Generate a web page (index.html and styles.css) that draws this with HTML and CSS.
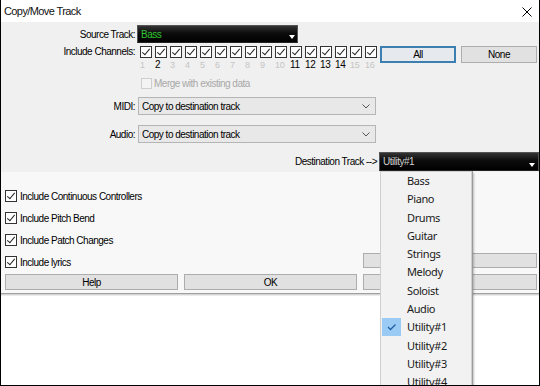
FILE: index.html
```html
<!DOCTYPE html>
<html lang="en">
<head>
    <meta charset="UTF-8">
    <meta name="viewport" content="width=device-width, initial-scale=1.0">
    <title>Copy/Move Track</title>
    <link rel="stylesheet" href="styles.css">
</head>
<body>
    <div class="dialog">
        <div class="titlebar">
            <span class="title">Copy/Move Track</span>
            <svg class="close" width="10" height="10" viewBox="0 0 10 10">
                <path d="M0.5 0.5 L9.5 9.5 M9.5 0.5 L0.5 9.5" stroke="#000" stroke-width="1" fill="none"/>
            </svg>
        </div>

        <!-- upper part: track and channel settings -->
        <div class="top-panel">
            <div class="row row-source">
                <span class="lbl">Source Track:</span>
                <div class="dark-select source">
                    <span class="val green">Bass</span>
                    <span class="arrow"></span>
                </div>
            </div>

            <div class="row row-channels">
                <span class="lbl">Include Channels:</span>
                <div class="channels">
                    <div class="ch"><span class="cb checked"></span><span class="num">1</span></div>
                    <div class="ch"><span class="cb checked"></span><span class="num on">2</span></div>
                    <div class="ch"><span class="cb checked"></span><span class="num">3</span></div>
                    <div class="ch"><span class="cb checked"></span><span class="num">4</span></div>
                    <div class="ch"><span class="cb checked"></span><span class="num">5</span></div>
                    <div class="ch"><span class="cb checked"></span><span class="num">6</span></div>
                    <div class="ch"><span class="cb checked"></span><span class="num">7</span></div>
                    <div class="ch"><span class="cb checked"></span><span class="num">8</span></div>
                    <div class="ch"><span class="cb checked"></span><span class="num">9</span></div>
                    <div class="ch"><span class="cb checked"></span><span class="num">10</span></div>
                    <div class="ch"><span class="cb checked"></span><span class="num on">11</span></div>
                    <div class="ch"><span class="cb checked"></span><span class="num on">12</span></div>
                    <div class="ch"><span class="cb checked"></span><span class="num on">13</span></div>
                    <div class="ch"><span class="cb checked"></span><span class="num on">14</span></div>
                    <div class="ch"><span class="cb checked"></span><span class="num">15</span></div>
                    <div class="ch"><span class="cb checked"></span><span class="num">16</span></div>
                </div>
                <button class="btn btn-all">All</button>
                <button class="btn btn-none">None</button>
            </div>

            <div class="row row-merge">
                <span class="cb disabled"></span>
                <span class="merge-text">Merge with existing data</span>
            </div>

            <div class="row row-combo first">
                <span class="lbl">MIDI:</span>
                <div class="combo">
                    <span>Copy to destination track</span>
                    <svg class="chevron" width="8" height="5" viewBox="0 0 8 5">
                        <path d="M0.5 0.5 L4 4 L7.5 0.5" stroke="#555" stroke-width="1" fill="none"/>
                    </svg>
                </div>
            </div>

            <div class="row row-combo">
                <span class="lbl">Audio:</span>
                <div class="combo">
                    <span>Copy to destination track</span>
                    <svg class="chevron" width="8" height="5" viewBox="0 0 8 5">
                        <path d="M0.5 0.5 L4 4 L7.5 0.5" stroke="#555" stroke-width="1" fill="none"/>
                    </svg>
                </div>
            </div>

            <div class="row row-dest">
                <span class="dest-lbl">Destination Track --&gt;</span>
                <div class="dark-select dest">
                    <span class="val">Utility#1</span>
                    <span class="arrow"></span>
                </div>
            </div>
        </div>

        <!-- lower part: options and buttons -->
        <div class="bottom-panel">
            <div class="opt r1"><span class="cb checked"></span>Include Continuous Controllers</div>
            <div class="opt r2"><span class="cb checked"></span>Include Pitch Bend</div>
            <div class="opt r3"><span class="cb checked"></span>Include Patch Changes</div>
            <div class="opt r4"><span class="cb checked"></span>Include lyrics</div>
            <button class="btn btn-extra"></button>
            <button class="btn btn-bottom">Help</button>
            <button class="btn btn-bottom">OK</button>
            <button class="btn btn-bottom">Cancel</button>
        </div>

        <!-- open destination track list -->
        <div class="menu">
            <div class="menu-item">Bass</div>
            <div class="menu-item">Piano</div>
            <div class="menu-item">Drums</div>
            <div class="menu-item">Guitar</div>
            <div class="menu-item">Strings</div>
            <div class="menu-item">Melody</div>
            <div class="menu-item">Soloist</div>
            <div class="menu-item">Audio</div>
            <div class="menu-item selected">
                <span class="check">
                    <svg width="19" height="18" viewBox="0 0 19 18">
                        <path d="M6 9 L8.5 11.5 L13.5 6.5" stroke="#1f5fa8" stroke-width="1.3" fill="none"/>
                    </svg>
                </span>
                Utility#1
            </div>
            <div class="menu-item">Utility#2</div>
            <div class="menu-item">Utility#3</div>
            <div class="menu-item">Utility#4</div>
        </div>
    </div>
</body>
</html>
```

FILE: styles.css
```css
body {
    margin: 0;
    font-family: "Liberation Sans", Arial, sans-serif;
    font-size: 10px;
    letter-spacing: -0.5px;
    color: #000;
}
.dialog {
    position: relative;
    width: 540px;
    height: 386px;
    box-sizing: border-box;
    border-left: 1px solid #000;
    border-right: 1px solid #000;
    border-bottom: 1px solid #000;
    background-color: #fff;
    overflow: hidden;
}
.titlebar {
    height: 22px;
    display: flex;
    align-items: center;
    justify-content: space-between;
    padding: 0 7px 0 3px;
    background-color: #fff;
}
.title {
    font-size: 11px;
    letter-spacing: -0.6px;
    color: #111;
}
.close {
    margin-top: 1px;
}

/* upper panel */
.top-panel {
    height: 150px;
    background-color: #f0f0f0;
    padding-top: 3px;
    box-sizing: border-box;
}
.row {
    display: flex;
    align-items: center;
}
.lbl {
    width: 135px;
    padding-right: 1px;
    box-sizing: border-box;
    text-align: right;
    flex-shrink: 0;
}
.row-source {
    height: 18px;
}
.dark-select {
    position: relative;
    height: 100%;
    box-sizing: border-box;
    border: 1px solid #555;
    border-bottom-color: #222;
    background: linear-gradient(#333, #0c0c0c 45%, #000);
    display: flex;
    align-items: center;
    padding-left: 3px;
}
.dark-select.source {
    width: 161px;
    margin-left: 1px;
}
.val {
    color: #cfcfcf;
}
.val.green {
    color: #2fc62f;
}
.arrow {
    position: absolute;
    right: 2px;
    bottom: 3px;
    width: 0;
    height: 0;
    border-left: 3px solid transparent;
    border-right: 3px solid transparent;
    border-top: 4px solid #fff;
}

/* channel checkboxes */
.row-channels {
    margin-top: 3px;
    align-items: flex-start;
    height: 24px;
}
.row-channels .lbl {
    line-height: 12px;
}
.channels {
    display: flex;
    margin-left: 3px;
}
.ch {
    width: 15px;
    display: flex;
    flex-direction: column;
}
.ch .cb {
    margin-left: 1px;
}
.num {
    margin-top: 2px;
    padding-left: 1px;
    font-size: 9px;
    line-height: 10px;
    letter-spacing: -0.3px;
    color: #c4c4c4;
}
.num.on {
    color: #000;
    font-size: 10px;
}
.cb {
    position: relative;
    display: inline-block;
    width: 12px;
    height: 12px;
    box-sizing: border-box;
    border: 1px solid #333;
    background-color: #fff;
    flex-shrink: 0;
}
.cb.checked::after {
    content: "";
    position: absolute;
    left: 3px;
    top: 0px;
    width: 3px;
    height: 7px;
    border-right: 1px solid #222;
    border-bottom: 1px solid #222;
    transform: rotate(40deg);
}
.cb.disabled {
    width: 11px;
    height: 11px;
    border-color: #cfcfcf;
    background-color: #f4f4f4;
}
.btn {
    font-family: inherit;
    font-size: 10px;
    letter-spacing: -0.5px;
    color: #000;
    background-color: #e1e1e1;
    border: 1px solid #adadad;
    padding: 0;
    box-sizing: border-box;
}
.btn-all {
    width: 76px;
    height: 17px;
    margin-left: 1px;
    border: 2px solid #3c7fb1;
    background-color: #e6eaee;
}
.btn-none {
    width: 76px;
    height: 17px;
    margin-left: 5px;
}
.row-merge {
    margin-top: 7px;
    height: 12px;
    padding-left: 140px;
}
.merge-text {
    margin-left: 2px;
    color: #a8a8a8;
}

/* MIDI / Audio combos */
.row-combo {
    height: 18px;
    margin-top: 10px;
}
.row-combo.first {
    margin-top: 8px;
}
.combo {
    width: 238px;
    height: 100%;
    margin-left: 2px;
    box-sizing: border-box;
    border: 1px solid #b5b5b5;
    background-color: #e8e8e8;
    display: flex;
    align-items: center;
    justify-content: space-between;
    padding: 0 5px 0 3px;
}
.row-dest {
    height: 19px;
    margin-top: 9px;
    justify-content: flex-end;
}
.dest-lbl {
    margin-right: 2px;
}
.dark-select.dest {
    width: 160px;
}
.dark-select.dest .arrow {
    right: 3px;
}

/* lower panel */
.bottom-panel {
    height: 122px;
    box-sizing: border-box;
    padding: 13px 0 3px 4px;
    background-color: #f8f8f8;
    border-bottom: 1px solid #a0a0a0;
    box-shadow: 0 1px 0 #d4d4d4, 0 2px 0 #ececec;
    display: grid;
    grid-template-columns: 173px 173px 174px;
    grid-template-rows: repeat(4, 22px) 17px;
    column-gap: 6px;
}
.opt {
    grid-column: 1 / 3;
    display: flex;
    align-items: center;
}
.opt .cb {
    margin-right: 3px;
}
.r1 { grid-row: 1; }
.r2 { grid-row: 2; }
.r3 { grid-row: 3; }
.r4 { grid-row: 4; }
.btn-extra {
    grid-column: 3;
    grid-row: 4;
    height: 15px;
    margin-top: 2px;
}
.btn-bottom {
    grid-row: 5;
    height: 16px;
    align-self: end;
}

/* dropdown list */
.menu {
    position: absolute;
    left: 379px;
    top: 171px;
    width: 92px;
    height: 230px;
    box-sizing: border-box;
    background-color: #f2f2f2;
    border: 1px solid #cfcfcf;
    box-shadow: 1px 0 0 #9a9a9a, 2px 2px 2px rgba(0, 0, 0, 0.25);
    font-family: "Noto Sans", "Open Sans", sans-serif;
    font-size: 11px;
    letter-spacing: -0.4px;
    color: #1a1a1a;
}
.menu-item {
    position: relative;
    height: 18.3px;
    line-height: 18.3px;
    padding-left: 26px;
}
.check {
    position: absolute;
    left: 1px;
    top: 0;
    width: 19px;
    height: 18px;
    background-color: #99cbf5;
    display: flex;
}
```
